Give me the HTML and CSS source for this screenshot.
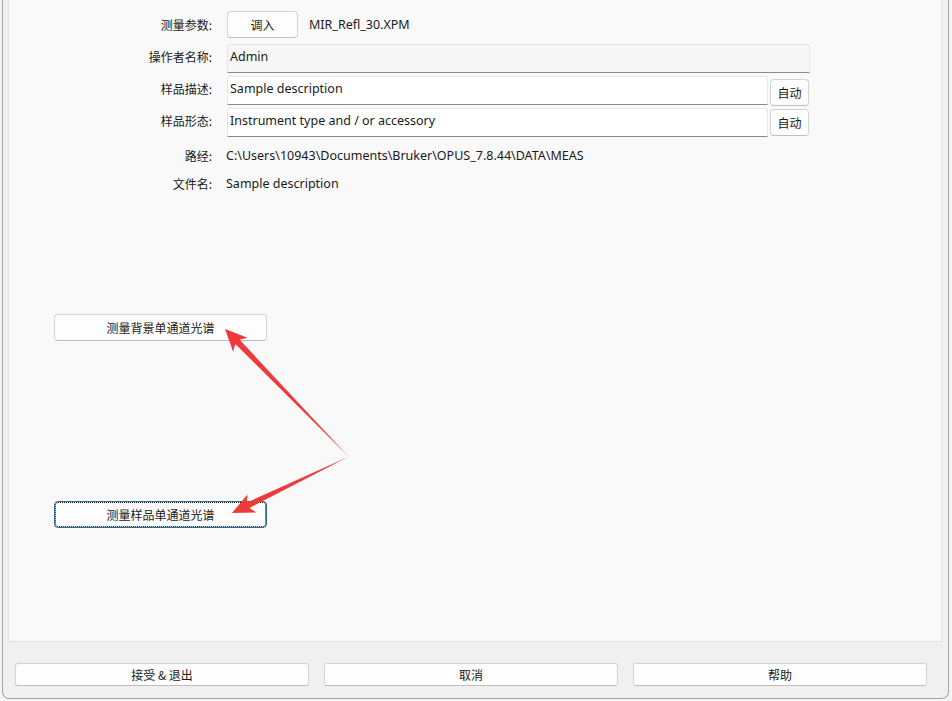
FILE: index.html
```html
<!DOCTYPE html>
<html lang="zh-CN">
<head>
<meta charset="utf-8">
<title>测量</title>
<link rel="stylesheet" href="styles.css">
</head>
<body>
<div class="window">
  <div class="panel">
    <div class="row row-top">
      <span class="label">测量参数:</span>
      <button class="btn btn-load">调入</button>
      <span class="value value-file">MIR_Refl_30.XPM</span>
    </div>
    <div class="row row-field row-first">
      <span class="label label-field">操作者名称:</span>
      <div class="field field-readonly field-wide">Admin</div>
    </div>
    <div class="row row-field">
      <span class="label label-field">样品描述:</span>
      <div class="field">Sample description</div>
      <button class="btn btn-auto">自动</button>
    </div>
    <div class="row row-field">
      <span class="label label-field">样品形态:</span>
      <div class="field">Instrument type and / or accessory</div>
      <button class="btn btn-auto btn-auto-2">自动</button>
    </div>
    <div class="row row-text">
      <span class="label">路经:</span>
      <span class="value">C:\Users\10943\Documents\Bruker\OPUS_7.8.44\DATA\MEAS</span>
    </div>
    <div class="row row-text">
      <span class="label">文件名:</span>
      <span class="value">Sample description</span>
    </div>
    <div class="measure">
      <button class="btn btn-measure btn-bg">测量背景单通道光谱</button>
      <button class="btn btn-measure btn-sample">测量样品单通道光谱</button>
    </div>
  </div>
  <div class="footer">
    <button class="btn btn-foot">接受 &amp; 退出</button>
    <button class="btn btn-foot">取消</button>
    <button class="btn btn-foot">帮助</button>
  </div>
  <svg class="arrows" width="952" height="701" viewBox="0 0 952 701">
    <polygon fill="#ee3a3a" points="224,329 246.5,337.8 238.7,339.8 347,456 234.3,344 232.1,351.7"/>
    <polygon fill="#ee3a3a" points="231,513 246.5,494.4 245.9,502.5 347,457 248.5,507.9 255.1,512.4"/>
  </svg>
</div>
</body>
</html>
```

FILE: styles.css
```css
* {
  box-sizing: border-box;
}

html, body {
  margin: 0;
  padding: 0;
  background: #f4f4f4;
}

body {
  width: 952px;
  height: 701px;
  overflow: hidden;
  font-family: "Noto Sans", "Noto Sans CJK SC", sans-serif;
  color: #1a1a1a;
}

.window {
  position: relative;
  margin-left: 2px;
  width: 947px;
  height: 699px;
  background: #f0f0f0;
  border: 1px solid #a3a3a3;
  border-top: none;
  border-radius: 0 0 7px 7px;
  display: flex;
  flex-direction: column;
}

.panel {
  margin-left: 5px;
  margin-right: 6px;
  height: 642px;
  background: #f9f9f9;
  border: 1px solid #e2e2e2;
  border-top: none;
  padding-top: 11px;
  display: flex;
  flex-direction: column;
}

.row {
  display: flex;
  align-items: center;
}

.label {
  width: 203px;
  text-align: right;
  font-family: "Noto Sans CJK SC", sans-serif;
  font-size: 12px;
  line-height: 18px;
  flex: none;
}

.value {
  font-size: 12.5px;
  line-height: 18px;
  margin-left: 14px;
  color: #1a1a1a;
}

.value-file {
  margin-left: 11px;
}

.btn {
  font-family: "Noto Sans CJK SC", sans-serif;
  font-size: 12px;
  color: #1a1a1a;
  background: #fdfdfd;
  border: 1px solid #d3d3d3;
  border-bottom-color: #bdbdbd;
  border-radius: 4px;
  padding: 0;
  margin: 0;
  line-height: 16px;
}

.btn-load {
  width: 71px;
  height: 27px;
  margin-left: 15px;
}

.row-field {
  align-items: flex-start;
  height: 29px;
  margin-top: 3px;
}

.row-first {
  margin-top: 6px;
}

.label-field {
  padding-top: 4px;
}

.field {
  width: 541px;
  height: 29px;
  margin-left: 15px;
  background: #ffffff;
  border: 1px solid #e6e6e6;
  border-bottom: 1px solid #8a8a8a;
  border-radius: 3px 3px 0 0;
  padding: 3px 0 0 2px;
  font-size: 12.5px;
  line-height: 18px;
}

.field-wide {
  width: 583px;
}

.field-readonly {
  background: #f7f7f7;
}

.btn-auto {
  width: 39px;
  height: 27px;
  margin-left: 2px;
  margin-top: 3px;
}

.btn-auto-2 {
  margin-top: 1px;
}

.row-text {
  margin-top: 10px;
}

.measure {
  display: flex;
  flex-direction: column;
  align-items: flex-start;
  padding-left: 45px;
}

.btn-measure {
  width: 213px;
  height: 27px;
}

.btn-bg {
  margin-top: 121px;
}

.btn-sample {
  margin-top: 160px;
  border: 1px solid #2f6a8a;
  outline: 1px dotted #111;
  outline-offset: -2px;
}

.footer {
  display: flex;
  gap: 15px;
  padding-left: 12px;
  padding-top: 21px;
}

.btn-foot {
  width: 294px;
  height: 23px;
  border-radius: 3px;
}

.arrows {
  position: absolute;
  left: -2px;
  top: 0;
  pointer-events: none;
}
```
